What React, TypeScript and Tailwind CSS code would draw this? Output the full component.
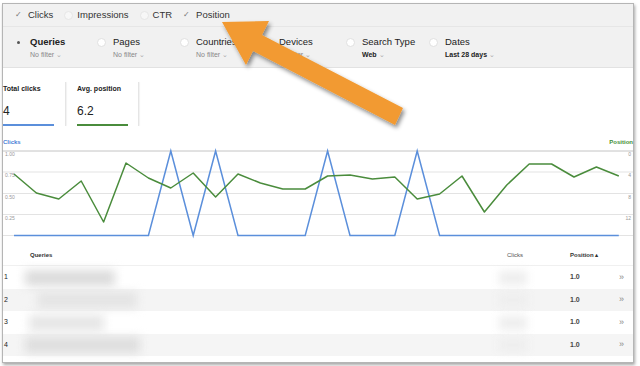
import React from "react";

const posY = [174, 193, 199, 181, 222, 163, 178, 188, 173, 197, 174, 183, 189, 189, 176, 175, 179, 177, 199, 194, 176, 212, 185, 164, 164, 177, 167, 176];
const clicks = posY.map((_, i) => (i === 7 || i === 9 || i === 14 || i === 18 ? 1 : 0));

const CHART_TOP = 146;
const px = (i: number) => 11 + 22.4 * i;

const filters = [
  { label: "Queries", sub: "No filter", on: true, strong: false },
  { label: "Pages", sub: "No filter", on: false, strong: false },
  { label: "Countries", sub: "No filter", on: false, strong: false },
  { label: "Devices", sub: "No filter", on: false, strong: false },
  { label: "Search Type", sub: "Web", on: false, strong: true },
  { label: "Dates", sub: "Last 28 days", on: false, strong: true },
];

const metrics = [
  { label: "Clicks", checked: true },
  { label: "Impressions", checked: false },
  { label: "CTR", checked: false },
  { label: "Position", checked: true },
];

const rows = [
  { n: "1", blur: "w-[90px] bg-[#dcdcdc]", shade: "bg-white" },
  { n: "2", blur: "w-[100px] bg-[#e4e4e4] ml-[12px]", shade: "bg-[#f4f4f4]" },
  { n: "3", blur: "w-[75px] bg-[#e6e6e6] ml-[4px]", shade: "bg-white" },
  { n: "4", blur: "w-[115px] bg-[#dedede]", shade: "bg-[#f5f5f5]" },
];

function Radio({ on }: { on: boolean }) {
  if (on)
    return (
      <span className="block w-[9px] h-[9px] flex items-center justify-center">
        <span className="block w-[3px] h-[3px] rounded-full bg-[#555]" />
      </span>
    );
  return <span className="block w-[9px] h-[9px] rounded-full bg-white border border-[#e0e0e0]" />;
}

function Chart() {
  const green = posY.map((y, i) => `${px(i)},${y - CHART_TOP}`).join(" ");
  const blue = clicks.map((v, i) => `${px(i)},${89.5 - v * 84.5}`).join(" ");
  const grid = [5, 26, 47.5, 68.5, 89.5];
  const left = ["1.00", "0.75", "0.50", "0.25"];
  const right = ["0", "4", "8", "12"];
  return (
    <svg width="630" height="94" className="block">
      {grid.map((g, i) => (
        <line key={g} x1="0" x2="630" y1={g} y2={g} stroke={i === 0 ? "#c4c4c4" : "#e3e3e3"} strokeWidth="1" />
      ))}
      {left.map((t, i) => (
        <text key={t} x="2" y={grid[i] + 5} fontSize="5" fill="#999" fontFamily="Liberation Sans, Arial, sans-serif">
          {t}
        </text>
      ))}
      {right.map((t, i) => (
        <text key={t} x="628" y={grid[i] + 5} fontSize="5" fill="#999" textAnchor="end" fontFamily="Liberation Sans, Arial, sans-serif">
          {t}
        </text>
      ))}
      <polyline points={blue} fill="none" stroke="#5b8fdb" strokeWidth="1.5" strokeLinejoin="miter" />
      <polyline points={green} fill="none" stroke="#4a8c3c" strokeWidth="1.5" strokeLinejoin="round" />
    </svg>
  );
}

function Arrow() {
  return (
    <svg className="absolute inset-0 pointer-events-none" width="640" height="366">
      <defs>
        <filter id="sh" x="-20%" y="-20%" width="140%" height="140%">
          <feDropShadow dx="2" dy="3" stdDeviation="2" floodColor="#000" floodOpacity="0.45" />
        </filter>
      </defs>
      <polygon
        points="222,22 269,21 262,35 403,108 395,125 253,51 246,65"
        fill="#f29a30"
        filter="url(#sh)"
      />
    </svg>
  );
}

export default function App() {
  return (
    <div className="relative w-[640px] h-[366px] bg-white overflow-hidden pt-[3px] pl-[2px] font-['Liberation_Sans',Arial,sans-serif] text-[#222]">
      <div className="w-[632px] h-[360px] border border-[#b5b5b5] shadow-[1px_2px_3px_rgba(0,0,0,0.35)] bg-white flex flex-col">
        {/* metric toggles + filters */}
        <div className="bg-[#f1f1f1] border-b border-[#e2e2e2]">
          <div className="h-[23px] flex items-center pl-[12px] gap-[11px] border-b border-[#e6e6e6]">
            {metrics.map((m) => (
              <div key={m.label} className="flex items-center gap-[4px]">
                {m.checked ? (
                  <span className="w-[9px] text-[8px] leading-none text-[#777]">✓</span>
                ) : (
                  <span className="w-[9px] h-[9px] rounded-full bg-[#f7f7f7] border border-[#e6e6e6]" />
                )}
                <span className="text-[9.5px] text-[#333]">{m.label}</span>
              </div>
            ))}
          </div>
          <div className="h-[40px] flex pl-[11px] pt-[9px]">
            {filters.map((f) => (
              <div key={f.label} className="w-[83px] flex gap-[7px]">
                <div className="pt-[2px]">
                  <Radio on={f.on} />
                </div>
                <div className="flex flex-col">
                  <span className={`text-[9.5px] leading-[12px] text-[#222] ${f.on ? "font-bold" : ""}`}>{f.label}</span>
                  <span className={`text-[7px] leading-[12px] mt-[1px] ${f.strong ? "font-bold text-[#222]" : "text-[#888]"}`}>
                    {f.sub} <span className="text-[#aaa] font-normal">⌄</span>
                  </span>
                </div>
              </div>
            ))}
          </div>
        </div>

        {/* summary cards */}
        <div className="flex mt-[12px] h-[46px]">
          <div className="w-[51px] flex flex-col">
            <span className="text-[7px] font-bold leading-[10px] mt-[4px]">Total clicks</span>
            <span className="text-[12px] leading-[14px] mt-[10px]">4</span>
            <span className="mt-auto h-[2px] bg-[#5b8fdb]" />
          </div>
          <div className="w-px bg-[#e5e5e5] ml-[11px] mt-[2px] shadow-[1px_0_1px_rgba(0,0,0,0.06)]" />
          <div className="w-[51px] flex flex-col ml-[11px]">
            <span className="text-[7px] font-bold leading-[10px] mt-[4px]">Avg. position</span>
            <span className="text-[12px] leading-[14px] mt-[10px]">6.2</span>
            <span className="mt-auto h-[2px] bg-[#4a8c3c]" />
          </div>
          <div className="w-px bg-[#e5e5e5] ml-[10px] mt-[2px] shadow-[1px_0_1px_rgba(0,0,0,0.06)]" />
        </div>

        {/* chart */}
        <div className="flex justify-between mt-[13px] h-[7px] text-[6px] leading-[7px] font-bold">
          <span className="text-[#4a80d6]">Clicks</span>
          <span className="text-[#3f8f33]">Position</span>
        </div>
        <Chart />

        {/* table */}
        <div className="mt-[6px] h-[20px] flex items-center text-[6px] font-bold text-[#333] border-b border-[#f0f0f0]">
          <span className="w-[27px]" />
          <span className="flex-1">Queries</span>
          <span className="w-[63px] font-normal text-[#555]">Clicks</span>
          <span className="w-[63px]">Position ▴</span>
        </div>
        {rows.map((r) => (
          <div key={r.n} className={`flex items-center ${r.n === "1" || r.n === "3" ? "h-[23px]" : "h-[22px]"} ${r.shade}`}>
            <span className="w-[22px] pl-[1px] text-[7px]">{r.n}</span>
            <div className="flex-1">
              <div className={`h-[16px] blur-[5px] ${r.blur}`} />
            </div>
            <div className="w-[63px]">
              <div className="w-[28px] h-[14px] bg-[#eeeeee] blur-[4px] -ml-[8px]" />
            </div>
            <span className="w-[49px] text-[7px] font-bold text-[#444]">1.0</span>
            <span className="w-[14px] text-[9px] text-[#888]">»</span>
          </div>
        ))}
      </div>
      <Arrow />
    </div>
  );
}
